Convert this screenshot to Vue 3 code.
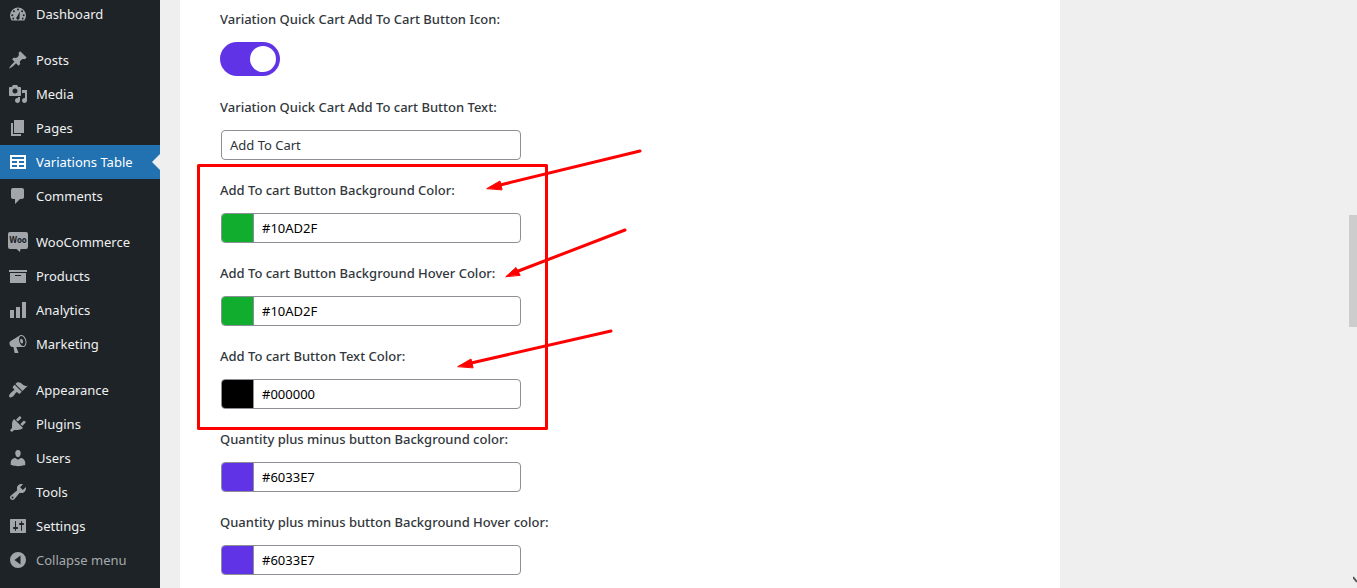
<script setup>
import { ref } from 'vue'

const menu = [
  [
    { label: 'Dashboard', path: 'M3.76 16.5h12.48A8 8 0 1 0 3.76 16.5zM10 4.4a1 1 0 1 1 0 2 1 1 0 0 1 0-2zM5.9 6.2a1 1 0 1 1 0 2 1 1 0 0 1 0-2zM14.1 6.2a1 1 0 1 1 0 2 1 1 0 0 1 0-2zM4.3 10.3a1 1 0 1 1 0 2 1 1 0 0 1 0-2zM15.7 10.3a1 1 0 1 1 0 2 1 1 0 0 1 0-2zM11.9 7.6l-.4 6a1.6 1.6 0 1 1-2.5-.9zM5.3 13.6a.9.9 0 1 1 0 1.8.9.9 0 0 1 0-1.8zM14.7 13.6a.9.9 0 1 1 0 1.8.9.9 0 0 1 0-1.8z' }
  ],
  [
    { label: 'Posts', path: 'M10.44 3.02l1.82-1.82 6.36 6.35-1.83 1.82c-1.05-.68-2.48-.57-3.41.36l-.75.75c-.92.93-1.04 2.35-.35 3.41l-1.83 1.82-2.41-2.41-2.8 2.79c-.42.42-3.38 2.71-3.8 2.29s1.86-3.39 2.28-3.81l2.79-2.79L4.1 9.36l1.83-1.82c1.05.69 2.48.57 3.4-.36l.75-.75c.93-.92 1.05-2.35.36-3.41z' },
    { label: 'Media', path: 'M13 11V4c0-.55-.45-1-1-1h-1.67L9 1H5L3.67 3H2c-.55 0-1 .45-1 1v7c0 .55.45 1 1 1h10c.55 0 1-.45 1-1zM7 4.5c1.38 0 2.5 1.12 2.5 2.5S8.38 9.5 7 9.5 4.5 8.38 4.5 7 5.62 4.5 7 4.5zM14 6h5v10.5c0 1.38-1.12 2.5-2.5 2.5S14 17.88 14 16.5s1.12-2.5 2.5-2.5c.17 0 .34.02.5.05V9h-3V6zm-4 8.05V13h2v3.5c0 1.38-1.12 2.5-2.5 2.5S7 17.88 7 16.5 8.12 14 9.5 14c.17 0 .34.02.5.05z' },
    { label: 'Pages', path: 'M6 15V2h10v13H6zm-1 1h8v2H3V5h2v11z' },
    { label: 'Variations Table', active: true, path: 'M18 17V3H2v14h16zM16 7H4V5h12v2zm-7 4H4V9h5v2zm7 0h-5V9h5v2zm-7 4H4v-2h5v2zm7 0h-5v-2h5v2z' },
    { label: 'Comments', path: 'M5 2h9c1.1 0 2 .9 2 2v7c0 1.1-.9 2-2 2h-2l-5 5v-5H5c-1.1 0-2-.9-2-2V4c0-1.1.9-2 2-2z' }
  ],
  [
    { label: 'WooCommerce', woo: true, path: 'M2 0h16a2 2 0 0 1 2 2v13a2 2 0 0 1-2 2h-5.500l-.5 3-3.500-3H2a2 2 0 0 1-2-2V2a2 2 0 0 1 2-2z' },
    { label: 'Products', path: 'M19 4v2H1V4h18zM2 7h16v10H2V7zm11 3V9H7v1h6z' },
    { label: 'Analytics', path: 'M18 18V2h-4v16h4zm-6 0V7H8v11h4zm-6 0v-8H2v8h4z' },
    { label: 'Marketing', path: 'M18.15 5.94c.46 1.62.38 3.22-.02 4.48-.42 1.28-1.26 2.18-2.3 2.48-.16.06-.26.06-.4.06-.06.02-.12.02-.18.02-.06.02-.14.02-.22.02h-6.8l2.22 5.5c.02.14-.06.26-.14.34-.08.1-.24.16-.34.16H6.95c-.1 0-.26-.06-.34-.16-.08-.08-.16-.2-.14-.34l-1-5.5H4.25l-.02-.02c-.5.06-1.08-.18-1.54-.62s-.88-1.08-1.06-1.88c-.24-.8-.2-1.56-.02-2.2.18-.62.58-1.08 1.06-1.3l.02-.02 9-5.4c.1-.06.18-.1.24-.16.06-.04.14-.08.24-.12.16-.08.28-.12.5-.18 1.04-.3 2.24.1 3.22.98s1.84 2.24 2.26 3.86zm-2.58 5.98h-.02c.4-.1.74-.34 1.04-.7.58-.7.86-1.76.86-3.04 0-.64-.1-1.3-.28-1.98-.34-1.36-1.02-2.5-1.78-3.24s-1.68-1.1-2.46-.88c-.82.22-1.4.96-1.7 2-.32 1.04-.28 2.36.06 3.72.38 1.36 1 2.5 1.8 3.24.78.74 1.62 1.1 2.48.88zm-2.54-7.08c.22-.04.42-.02.62.04.38.16.76.48 1.02 1s.42 1.2.42 1.78c0 .3-.04.56-.12.8-.18.48-.44.84-.86.94-.34.1-.8-.06-1.14-.4s-.64-.86-.78-1.5c-.18-.62-.12-1.24.02-1.72s.48-.84.82-.94z' }
  ],
  [
    { label: 'Appearance', path: 'M14.48 11.06L7.41 3.99l1.5-1.5c.5-.56 2.3-.47 3.51.32 1.21.8 1.43 1.28 2.91 2.1 1.18.64 2.45 1.26 4.45.85zm-.71.71L6.7 4.7 4.93 6.47c-.39.39-.39 1.02 0 1.41l1.06 1.06c.39.39.39 1.03 0 1.42-.6.6-1.43 1.11-2.21 1.69-.35.26-.7.53-1.01.84C1.43 14.23.4 16.08 1.4 17.07c.99 1 2.84-.03 4.18-1.36.31-.31.58-.66.85-1.02.57-.78 1.08-1.61 1.69-2.21.39-.39 1.02-.39 1.41 0l1.06 1.06c.39.39 1.02.39 1.41 0z' },
    { label: 'Plugins', path: 'M13.11 4.36L9.87 7.6 8 5.73l3.24-3.24c.35-.34 1.05-.2 1.56.32.52.51.66 1.21.31 1.55zm-8 1.77l.91-1.12 9.01 9.01-1.19.84c-.71.71-2.63 1.16-3.82 1.16H6.14L4.9 17.26c-.59.59-1.54.59-2.12 0-.59-.58-.59-1.53 0-2.12l1.24-1.24v-3.88c0-1.13.4-3.19 1.09-3.89zm7.26 3.97l3.24-3.24c.34-.35 1.04-.21 1.55.31.52.51.66 1.21.31 1.55l-3.24 3.25z' },
    { label: 'Users', path: 'M10 9.25c-2.27 0-2.73-3.44-2.73-3.44C7 4.02 7.82 2 9.97 2c2.16 0 2.98 2.02 2.71 3.81 0 0-.41 3.44-2.68 3.44zm0 2.57L12.72 10c2.39 0 4.52 2.33 4.52 4.53v2.49s-3.65 1.13-7.24 1.13c-3.65 0-7.24-1.13-7.24-1.13v-2.49c0-2.25 1.94-4.48 4.47-4.48z' },
    { label: 'Tools', path: 'M16.68 9.77c-1.34 1.34-3.3 1.67-4.95.99l-5.41 6.52c-.99.99-2.59.99-3.58 0s-.99-2.59 0-3.57l6.52-5.42c-.68-1.65-.35-3.61.99-4.95 1.28-1.28 3.12-1.62 4.72-1.06l-2.89 2.89 2.82 2.82 2.86-2.87c.53 1.58.18 3.39-1.08 4.65zM3.81 16.21c.4.39 1.04.39 1.43 0 .4-.4.4-1.04 0-1.43-.39-.4-1.03-.4-1.43 0-.39.39-.39 1.03 0 1.43z' },
    { label: 'Settings', path: 'M18 16V4c0-.55-.45-1-1-1H3c-.55 0-1 .45-1 1v12c0 .55.45 1 1 1h14c.55 0 1-.45 1-1zM8 11h1c.55 0 1 .45 1 1s-.45 1-1 1H8v1.5c0 .28-.22.5-.5.5s-.5-.22-.5-.5V13H6c-.55 0-1-.45-1-1s.45-1 1-1h1V5.500c0-.28.22-.5.5-.5s.5.22.5.5V11zm5-2h-1c-.55 0-1-.45-1-1s.45-1 1-1h1V5.500c0-.28.22-.5.5-.5s.5.22.5.5V7h1c.55 0 1 .45 1 1s-.45 1-1 1h-1v5.500c0 .28-.22.5-.5.5s-.5-.22-.5-.5V9z' }
  ]
]

const showIcon = ref(true)
const buttonText = ref('Add To Cart')
const colors = ref([
  { id: 'cart-bg', label: 'Add To cart Button Background Color:', value: '#10AD2F' },
  { id: 'cart-hover', label: 'Add To cart Button Background Hover Color:', value: '#10AD2F' },
  { id: 'cart-text', label: 'Add To cart Button Text Color:', value: '#000000' },
  { id: 'qty-bg', label: 'Quantity plus minus button Background color:', value: '#6033E7' },
  { id: 'qty-hover', label: 'Quantity plus minus button Background Hover color:', value: '#6033E7' }
])
</script>

<template>
  <div class="page">
    <nav class="sidebar" aria-label="Main menu">
      <ul v-for="(group, g) in menu" :key="g" class="group">
        <li v-for="item in group" :key="item.label">
          <a href="#" class="item" :class="{ active: item.active }">
            <svg class="icon" viewBox="0 0 20 20" aria-hidden="true">
              <path :d="item.path" fill-rule="evenodd" />
              <text v-if="item.woo" class="woo" x="10" y="11" text-anchor="middle">Woo</text>
            </svg>
            <span>{{ item.label }}</span>
          </a>
        </li>
      </ul>
      <button type="button" class="item collapse">
        <svg class="icon" viewBox="0 0 20 20" aria-hidden="true">
          <path d="M10 2a8 8 0 1 1 0 16 8 8 0 0 1 0-16zM12.500 5.500v9L6.500 10z" fill-rule="evenodd" />
        </svg>
        <span>Collapse menu</span>
      </button>
    </nav>

    <main class="content">
      <form class="panel" @submit.prevent>
        <div class="field">
          <label for="show-icon">Variation Quick Cart Add To Cart Button Icon:</label>
          <div class="toggle-row">
            <input id="show-icon" v-model="showIcon" type="checkbox" class="toggle" />
          </div>
        </div>
        <div class="field">
          <label for="button-text">Variation Quick Cart Add To cart Button Text:</label>
          <div class="control">
            <input id="button-text" v-model="buttonText" type="text" />
          </div>
        </div>
        <div v-for="c in colors" :key="c.id" class="field">
          <label :for="c.id">{{ c.label }}</label>
          <div class="control color">
            <button type="button" class="swatch" :style="{ background: c.value }" aria-label="Pick a color"></button>
            <input :id="c.id" v-model="c.value" type="text" />
          </div>
        </div>

        <svg class="marks" width="480" height="440" viewBox="0 0 480 440" aria-hidden="true">
          <rect x="18.500" y="165.500" width="348" height="263" />
          <path d="M460 151L318 185.500M445 230L337 271.500M431 331L289 363.500" />
          <path class="head" d="M307 188.500L320 181L322 189.500zM326 276.500L336 267.500L340 275zM278 366.500L291 359L293 367.500z" />
        </svg>
      </form>
    </main>

    <div class="scroll-thumb"></div>
    <svg class="pointer" width="4" height="12" viewBox="0 0 4 12" aria-hidden="true">
      <path d="M0 1L4 6" />
    </svg>
  </div>
</template>

<style>
body {
  margin: 0;
  background: #efefef;
}
</style>

<style scoped>
.page {
  position: relative;
  display: flex;
  height: 100vh;
  overflow: hidden;
  background: #efefef;
  font-family: "Noto Sans", "Open Sans", sans-serif;
  font-size: 13px;
}

.sidebar {
  flex: none;
  box-sizing: border-box;
  width: 160px;
  background: #1d2327;
}

.group {
  margin: 0 0 12px;
  padding: 0;
  list-style: none;
}

.group:first-child {
  margin-top: -3px;
}

.group:last-of-type {
  margin-bottom: 0;
}

.item {
  position: relative;
  display: flex;
  align-items: center;
  gap: 8px;
  box-sizing: border-box;
  width: 100%;
  height: 34px;
  padding: 0 8px;
  color: #f0f0f1;
  text-decoration: none;
  white-space: nowrap;
}

.icon {
  flex: none;
  width: 20px;
  height: 20px;
  fill: #a2a6ab;
}

.woo {
  fill: #1d2327;
  font-family: "Liberation Sans Narrow", "DejaVu Sans Condensed", "Liberation Sans", sans-serif;
  font-size: 8px;
  font-weight: 700;
}

.active {
  background: #2271b1;
  color: #fff;
}

.active .icon {
  fill: #fff;
}

.active::after {
  content: "";
  position: absolute;
  top: 9px;
  right: 0;
  border: 8px solid transparent;
  border-left: 0;
  border-right-color: #efefef;
}

.collapse {
  border: 0;
  background: none;
  color: #a7aaad;
  font: inherit;
}

.content {
  flex: 1;
  min-width: 0;
  padding: 0 20px;
}

.panel {
  position: relative;
  box-sizing: border-box;
  max-width: 880px;
  min-height: 100%;
  padding: 8px 40px;
  background: #fff;
}

.field {
  margin-bottom: 19px;
}

.field label {
  display: block;
  margin-bottom: 12px;
  color: #32373c;
  font-weight: 500;
  line-height: 22px;
}

.toggle-row {
  height: 35px;
}

.toggle {
  appearance: none;
  display: flex;
  box-sizing: border-box;
  width: 60px;
  height: 34px;
  margin: 0;
  padding: 4px;
  border-radius: 17px;
  background: #ccc;
}

.toggle::before {
  content: "";
  width: 26px;
  height: 26px;
  border-radius: 50%;
  background: #fff;
}

.toggle:checked {
  justify-content: flex-end;
  background: #6033e7;
}

.control {
  display: flex;
  box-sizing: border-box;
  max-width: 300px;
  height: 30px;
  margin: 0 1px;
  border: 1px solid #8c8f94;
  border-radius: 4px;
  overflow: hidden;
  background: #fff;
}

.control input {
  flex: 1;
  min-width: 0;
  padding: 0 8px;
  border: 0;
  outline: 0;
  background: transparent;
  color: #2c3338;
  font: inherit;
}

.control.color input {
  color: #000;
}

.swatch {
  flex: none;
  width: 32px;
  padding: 0;
  border: 0;
  border-right: 1px solid #8c8f94;
}

.marks {
  position: absolute;
  top: 0;
  left: 0;
  pointer-events: none;
  fill: none;
  stroke: #f00;
  stroke-width: 3;
  stroke-linecap: round;
  stroke-linejoin: round;
}

.marks .head {
  fill: #f00;
  stroke-width: 1;
}

.scroll-thumb {
  position: absolute;
  top: 215px;
  right: 0;
  width: 8px;
  height: 112px;
  background: #cdcdcd;
}

.pointer {
  position: absolute;
  right: 0;
  bottom: 0;
  fill: none;
  stroke: #555;
  stroke-width: 2;
}
</style>
